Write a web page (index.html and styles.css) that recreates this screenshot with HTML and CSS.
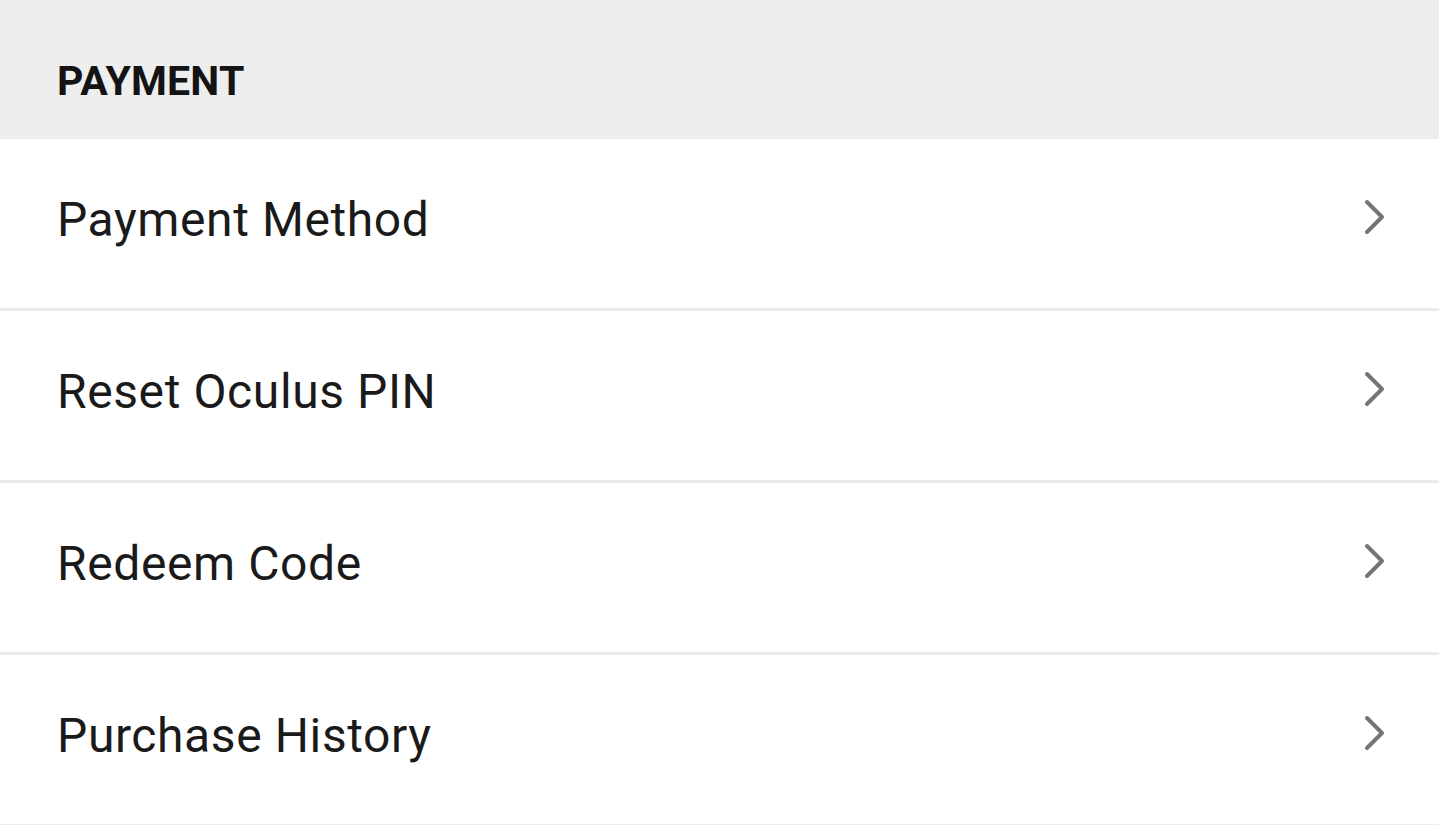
FILE: index.html
```html
<!DOCTYPE html>
<html>
<head>
<meta charset="utf-8"/>
<title>Payment</title>
<link rel="stylesheet" href="styles.css">
</head>
<body>
<div class="section-header">PAYMENT</div>
<ul class="menu">
  <li class="menu-item"><span class="label">Payment Method</span><svg class="chevron" viewBox="0 0 24 36"><polyline points="4,3 19,18 4,33"/></svg></li>
  <li class="menu-item"><span class="label">Reset Oculus PIN</span><svg class="chevron" viewBox="0 0 24 36"><polyline points="4,3 19,18 4,33"/></svg></li>
  <li class="menu-item"><span class="label">Redeem Code</span><svg class="chevron" viewBox="0 0 24 36"><polyline points="4,3 19,18 4,33"/></svg></li>
  <li class="menu-item"><span class="label">Purchase History</span><svg class="chevron" viewBox="0 0 24 36"><polyline points="4,3 19,18 4,33"/></svg></li>
</ul>
</body>
</html>
```
FILE: styles.css
```css
body {
  margin: 0;
  background-color: white;
  font-family: Roboto, "Noto Sans", sans-serif;
  color: #1a1a1a;
}

.section-header {
  background-color: #eeeeee;
  height: 139px;
  box-sizing: border-box;
  padding: 56px 0 0 57px;
  font-size: 41px;
  font-weight: bold;
  line-height: 50px;
  letter-spacing: 0.2px;
  color: #141414;
}

.menu {
  list-style: none;
  margin: 0;
  padding: 0;
}

.menu-item {
  display: flex;
  align-items: center;
  justify-content: space-between;
  height: 169px;
  box-sizing: content-box;
  padding: 0 52px 0 57px;
  border-bottom: 3px solid #ebebeb;
}

.label {
  font-size: 48px;
  line-height: 56px;
  letter-spacing: 0.6px;
  margin-top: -8px;
}

.chevron {
  width: 24px;
  height: 36px;
  margin-top: -14px;
}

.chevron polyline {
  fill: none;
  stroke: #757575;
  stroke-width: 4;
  stroke-linecap: round;
  stroke-linejoin: round;
}
```
